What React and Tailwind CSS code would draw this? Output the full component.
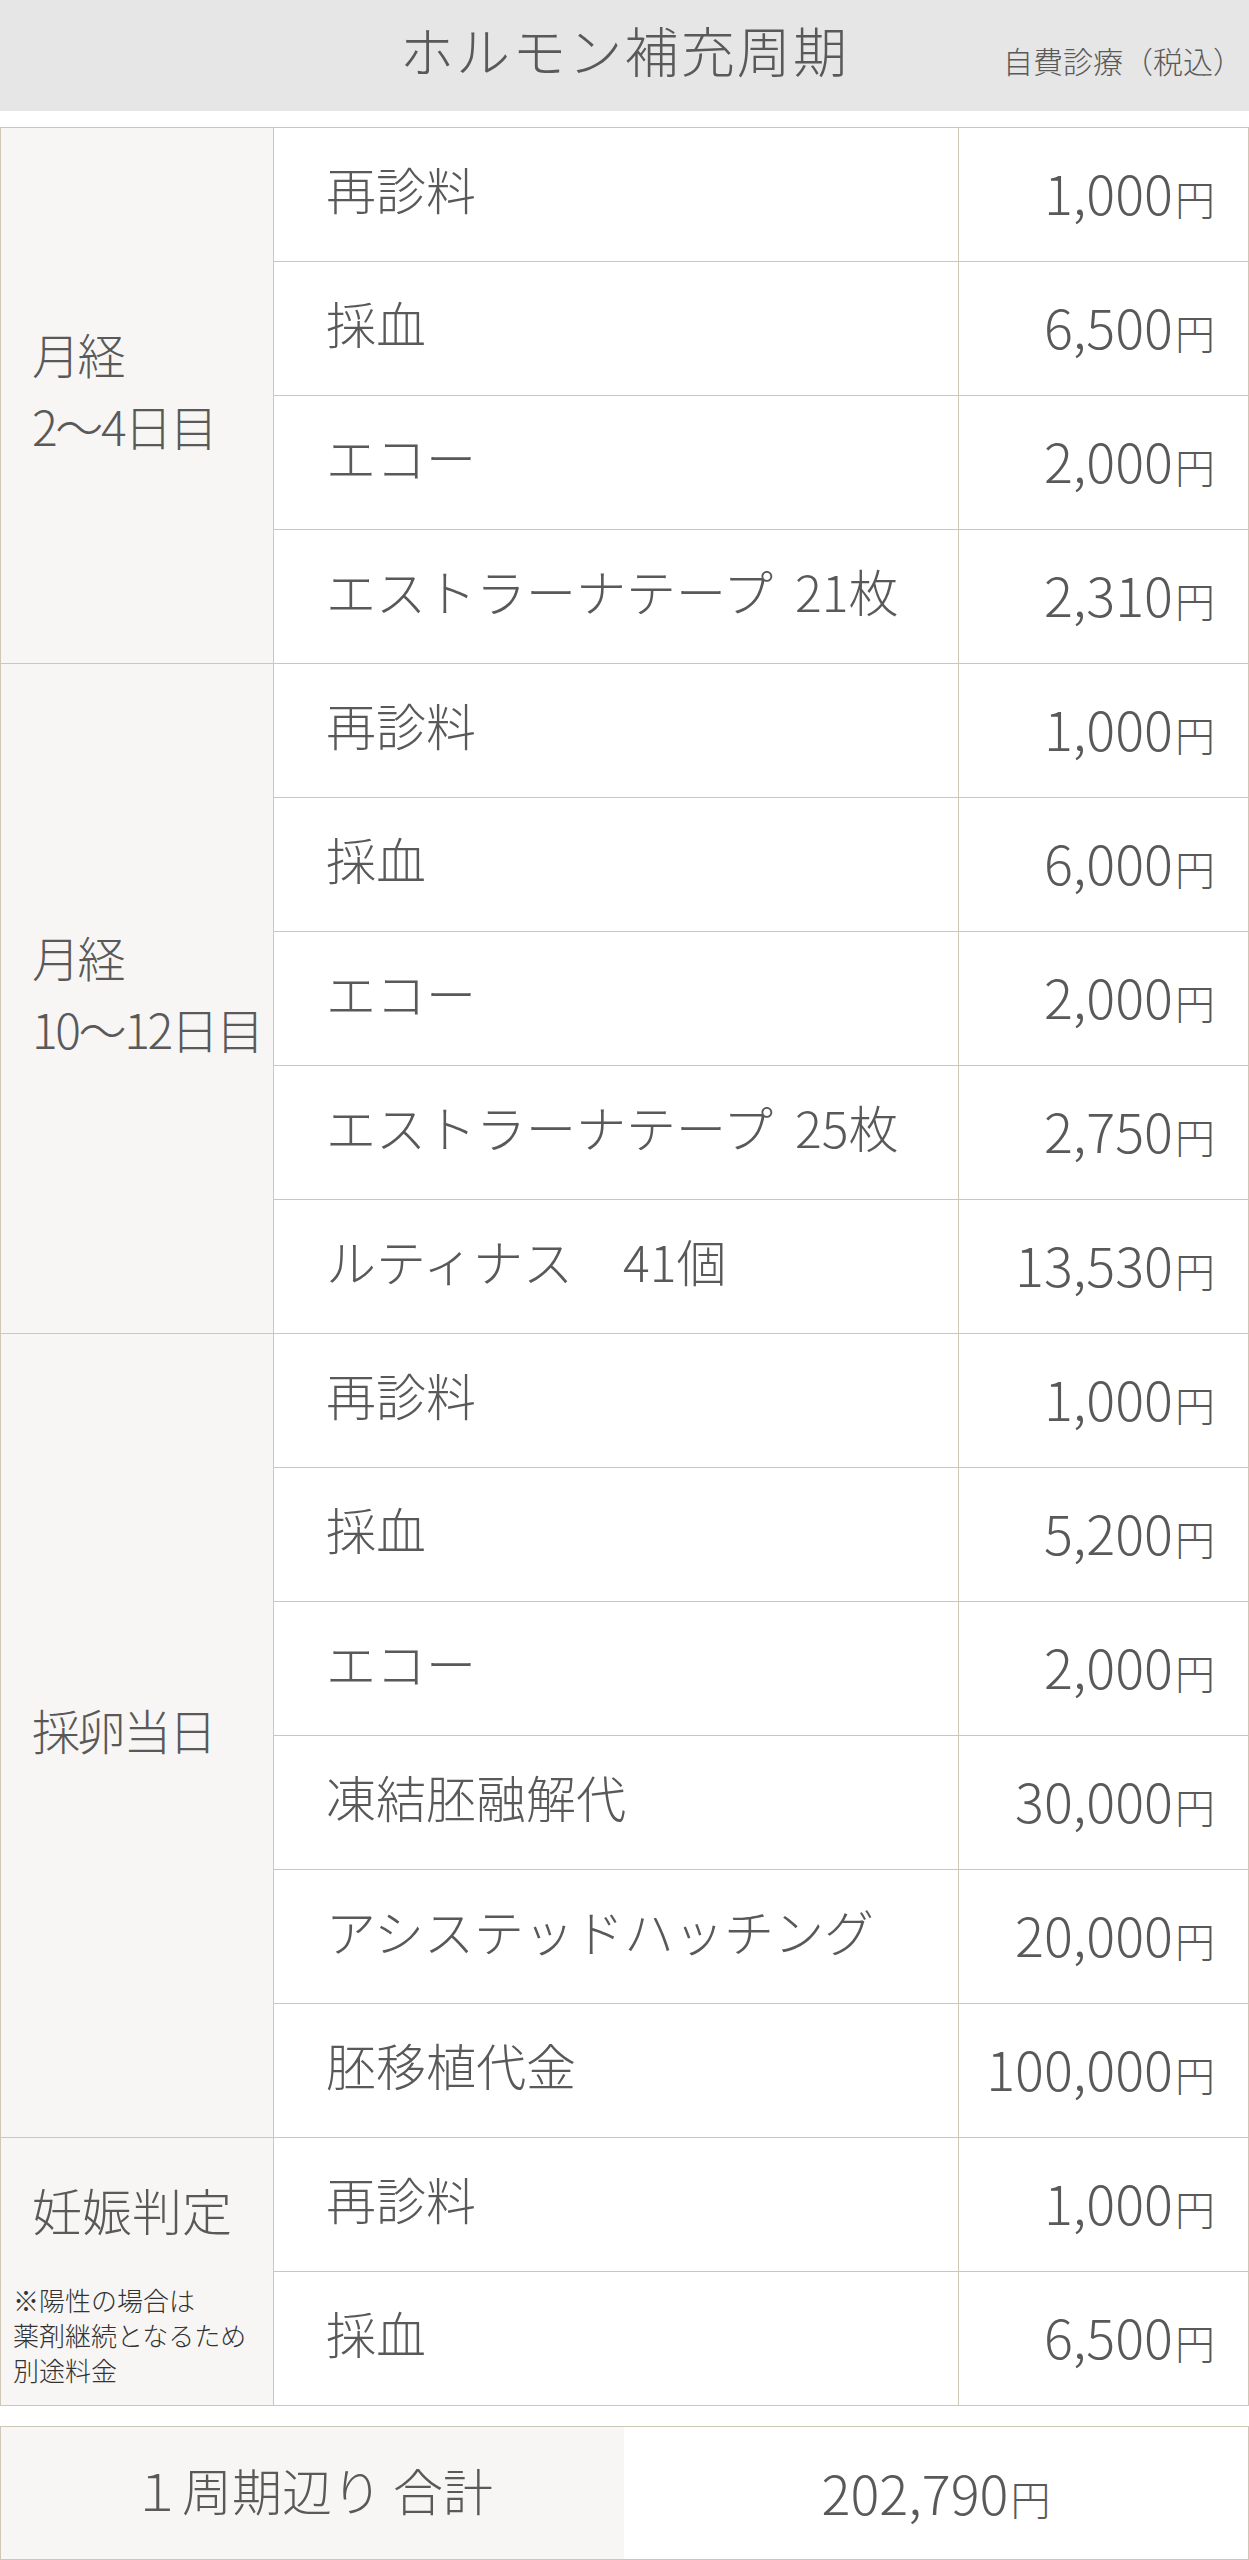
import React from 'react'

const groups = [
    {
        label: ['月経', '2〜4日目'],
        items: [
            ['再診料', '1,000'],
            ['採血', '6,500'],
            ['エコー', '2,000'],
            ['エストラーナテープ  21枚', '2,310'],
        ],
    },
    {
        label: ['月経', '10〜12日目'],
        items: [
            ['再診料', '1,000'],
            ['採血', '6,000'],
            ['エコー', '2,000'],
            ['エストラーナテープ  25枚', '2,750'],
            ['ルティナス　41個', '13,530'],
        ],
    },
    {
        label: ['採卵当日'],
        items: [
            ['再診料', '1,000'],
            ['採血', '5,200'],
            ['エコー', '2,000'],
            ['凍結胚融解代', '30,000'],
            ['アシステッドハッチング', '20,000'],
            ['胚移植代金', '100,000'],
        ],
    },
    {
        label: ['妊娠判定'],
        note: ['※陽性の場合は', '薬剤継続となるため', '別途料金'],
        items: [
            ['再診料', '1,000'],
            ['採血', '6,500'],
        ],
    },
]

const Price = ({ value }) => (
    <span className="whitespace-nowrap">
        <span className="text-[54px]">{value}</span>
        <span className="text-[40px] ml-[2px]">円</span>
    </span>
)

const App = () => {
    return (
        <div className="w-[1249px] bg-white text-[#595959] font-light font-['Noto_Sans_CJK_JP',sans-serif]">
            <div className="h-[111px] bg-[#e6e6e6] grid grid-cols-[1fr_auto_1fr] items-center">
                <div />
                <h1 className="text-[54px] tracking-[0.04em] leading-none pb-[12px]">
                    ホルモン補充周期
                </h1>
                <div className="justify-self-end pr-[6px] pt-[8px] text-[30px] leading-none">
                    自費診療（税込）
                </div>
            </div>

            <table className="mt-[16px] w-full border-collapse table-fixed">
                <colgroup>
                    <col className="w-[273px]" />
                    <col className="w-[685px]" />
                    <col />
                </colgroup>
                <tbody>
                    {groups.map((group, gi) =>
                        group.items.map(([name, price], i) => (
                            <tr key={`${gi}-${i}`} className="h-[134px]">
                                {i === 0 &&
                                    (group.note ? (
                                        <td
                                            rowSpan={group.items.length}
                                            className="border border-[#d0c6b8] bg-[#f7f6f4] align-top p-0"
                                        >
                                            <div className="pl-[31px] pt-[41px] text-[50px] leading-[60px]">
                                                {group.label[0]}
                                            </div>
                                            <div className="pl-[12px] mt-[43px] text-[26px] leading-[35px] text-[#333]">
                                                {group.note.map((line) => (
                                                    <div key={line}>{line}</div>
                                                ))}
                                            </div>
                                        </td>
                                    ) : (
                                        <td
                                            rowSpan={group.items.length}
                                            className="border border-[#d0c6b8] bg-[#f7f6f4] pl-[31px] pb-[14px] text-[48px] tracking-[-0.05em] leading-[72px] align-middle whitespace-nowrap"
                                        >
                                            {group.label.map((line) => (
                                                <div key={line}>{line}</div>
                                            ))}
                                        </td>
                                    ))}
                                <td className="border border-[#d0c6b8] pl-[52px] pb-[12px] text-[50px] whitespace-pre align-middle">
                                    {name}
                                </td>
                                <td className="border border-[#d0c6b8] pr-[33px] pb-[6px] text-right align-middle">
                                    <Price value={price} />
                                </td>
                            </tr>
                        ))
                    )}
                </tbody>
            </table>

            <div className="mt-[20px] h-[134px] border border-[#d0c6b8] flex">
                <div className="w-[623px] bg-[#f7f6f4] flex items-center justify-center pb-[8px] text-[50px]">
                    １周期辺り 合計
                </div>
                <div className="flex-1 flex items-center justify-center pb-[4px]">
                    <Price value="202,790" />
                </div>
            </div>
        </div>
    )
}

export default App
